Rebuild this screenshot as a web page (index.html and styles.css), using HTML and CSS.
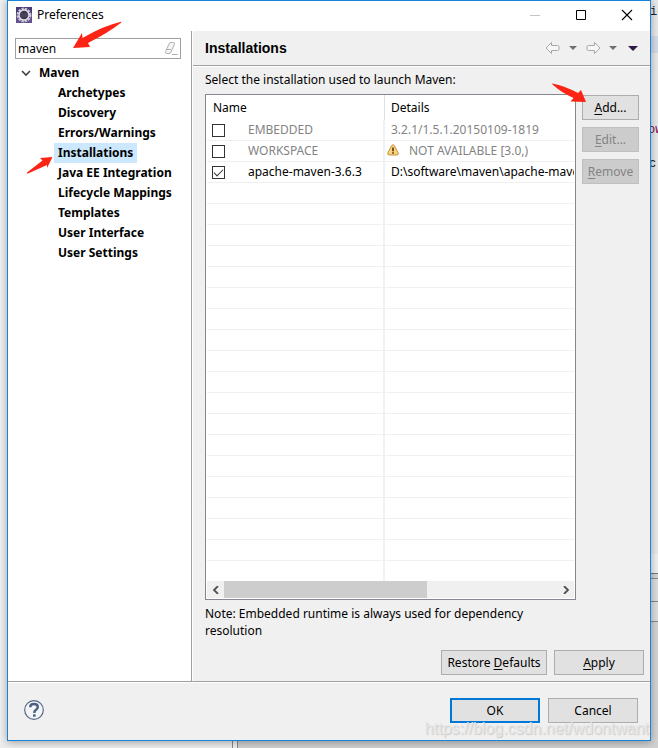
FILE: index.html
```html
<!DOCTYPE html>
<html lang="en">
<head>
<meta charset="utf-8">
<title>Preferences</title>
<link rel="stylesheet" href="styles.css">
</head>
<body>
<div class="backdrop" aria-hidden="true">
  <div class="editor">
    <span class="frag frag-a">i<b>c</b></span>
    <span class="current-line"></span>
    <span class="frag frag-b">ow</span>
    <span class="frag frag-c">c<b>:</b></span>
  </div>
  <div class="views"><i></i><i></i><i></i></div>
  <div class="bottom"><div class="bottom-left"></div><div class="bottom-right"></div></div>
</div>

<main class="window">
  <header class="titlebar">
    <svg class="app-icon" viewBox="0 0 16 16" aria-hidden="true">
      <rect width="16" height="16" fill="#4a3a78"/>
      <rect y="8" width="16" height="8" fill="#65508f"/>
      <circle cx="8" cy="8" r="6.3" fill="none" stroke="#c9c6d2" stroke-width="2.2" stroke-dasharray="2.3 1"/>
      <circle cx="8" cy="8" r="5" fill="#3b3450" stroke="#e3e2e8" stroke-width="1.4"/>
      <path d="M4 7h8M4 9h8" stroke="#5a5270"/>
    </svg>
    <h1>Preferences</h1>
    <div class="caption-buttons">
      <button type="button" aria-label="Minimize" disabled><svg viewBox="0 0 12 12"><path d="M1 6.5h10" stroke="#c4c4c4"/></svg></button>
      <button type="button" aria-label="Maximize"><svg viewBox="0 0 12 12"><path d="M1.5 1.5h9v9h-9z" fill="none" stroke="#000"/></svg></button>
      <button type="button" aria-label="Close"><svg viewBox="0 0 12 12"><path d="M1 1l10 10M11 1L1 11" stroke="#000" stroke-width="1.1"/></svg></button>
    </div>
  </header>

  <div class="content">
    <nav class="sidebar">
      <div class="filter">
        <input type="text" value="maven" aria-label="Filter text">
        <button type="button" aria-label="Clear"><svg viewBox="0 0 14 14"><path d="M1.500 9.500L5 2q.5-1.500 2-1.500h2.500q1.500 0 1 1.500L7 10q-.5 1.500-2 1.500H2.500q-1.500 0-1-2z" fill="#f4f4f4" stroke="#b0b0b0"/><path d="M2.500 7.500h4l1 1M8 12.500h5.500" fill="none" stroke="#b0b0b0"/></svg></button>
      </div>
      <ul class="tree">
        <li><a class="root" href="#"><svg viewBox="0 0 10 10" aria-hidden="true"><path d="M1 3l4 4 4-4" fill="none" stroke="#404040" stroke-width="1.600"/></svg>Maven</a>
          <ul>
            <li><a href="#">Archetypes</a></li>
            <li><a href="#">Discovery</a></li>
            <li><a href="#">Errors/Warnings</a></li>
            <li><a class="selected" href="#">Installations</a></li>
            <li><a href="#">Java EE Integration</a></li>
            <li><a href="#">Lifecycle Mappings</a></li>
            <li><a href="#">Templates</a></li>
            <li><a href="#">User Interface</a></li>
            <li><a href="#">User Settings</a></li>
          </ul>
        </li>
      </ul>
    </nav>

    <section class="page">
      <div class="page-head">
        <h2>Installations</h2>
        <div class="history">
          <button type="button" aria-label="Back"><svg width="16" height="14" viewBox="0 0 16 14"><path d="M1 7l5.500-5.500v3h6q1.500 0 1.500 1.500v2q0 1.500-1.500 1.500h-6v3z" fill="#f6f6f6" stroke="#a8a8a8"/></svg></button>
          <button type="button" aria-label="Back history"><svg width="8" height="4" viewBox="0 0 8 4"><path d="M0 0h8L4 4z" fill="#707074"/></svg></button>
          <button type="button" aria-label="Forward"><svg width="16" height="14" viewBox="0 0 16 14"><path d="M15 7L9.500 1.500v3h-6Q2 4.500 2 6v2q0 1.500 1.500 1.500h6v3z" fill="#f6f6f6" stroke="#a8a8a8"/></svg></button>
          <button type="button" aria-label="Forward history"><svg width="8" height="4" viewBox="0 0 8 4"><path d="M0 0h8L4 4z" fill="#707074"/></svg></button>
          <button class="view-menu" type="button" aria-label="View menu"><svg width="10" height="5" viewBox="0 0 10 5"><path d="M0 0h10L5 5z" fill="#2e1a47"/></svg></button>
        </div>
      </div>

      <div class="page-body">
        <p class="prompt">Select the installation used to launch Maven:</p>
        <div class="chooser">
          <div class="grid">
            <div class="grid-view">
              <table>
                <colgroup><col class="name-col"><col></colgroup>
                <thead><tr><th>Name</th><th>Details</th></tr></thead>
                <tbody>
                  <tr class="muted"><td><label><input type="checkbox">EMBEDDED</label></td><td>3.2.1/1.5.1.20150109-1819</td></tr>
                  <tr class="muted"><td><label><input type="checkbox">WORKSPACE</label></td><td class="warned"><svg viewBox="0 0 12 12" aria-hidden="true"><path d="M6 .8q1 0 1.600 1.200l3.400 6.500q1 2.500-1 2.500H2q-2 0-1-2.500L4.400 2Q5 .8 6 .8z" fill="#f8d380" stroke="#c99339"/><path d="M6 3.500v3.700M6 8.300v1.400" stroke="#4c3510" stroke-width="1.600"/></svg>NOT AVAILABLE [3.0,)</td></tr>
                  <tr><td><label><input type="checkbox" checked>apache-maven-3.6.3</label></td><td>D:\software\maven\apache-maven-3.6.3</td></tr>
                </tbody>
              </table>
              <div class="empty-rows"></div>
            </div>
            <div class="scrollbar">
              <button type="button" aria-label="Scroll left"><svg viewBox="0 0 8 8"><path d="M6 0L2 4l4 4" fill="none" stroke="#505050" stroke-width="1.800"/></svg></button>
              <div class="track"><div class="thumb"></div></div>
              <button type="button" aria-label="Scroll right"><svg viewBox="0 0 8 8"><path d="M2 0l4 4-4 4" fill="none" stroke="#505050" stroke-width="1.800"/></svg></button>
            </div>
          </div>
          <div class="side-buttons">
            <button class="btn" type="button"><u>A</u>dd...</button>
            <button class="btn" type="button" disabled><u>E</u>dit...</button>
            <button class="btn" type="button" disabled><u>R</u>emove</button>
          </div>
        </div>
        <p class="note">Note: Embedded runtime is always used for dependency resolution</p>
      </div>
      <div class="page-actions">
        <button class="btn restore" type="button">Restore <u>D</u>efaults</button>
        <button class="btn wide" type="button"><u>A</u>pply</button>
      </div>
    </section>
  </div>

  <footer class="footer">
    <button class="help" type="button" aria-label="Help"><svg viewBox="0 0 20 20"><circle cx="10" cy="10" r="9.300" fill="#f4f5f7" stroke="#56688a" stroke-width="1.200"/><path d="M6.200 7.200Q6.200 4 10 4t3.800 3Q13.800 8.600 12 9.800T10.300 13" fill="none" stroke="#4d6083" stroke-width="2.400"/><path d="M9 14.300h2.600v2.400H9z" fill="#4d6083"/></svg></button>
    <div class="dialog-actions">
      <button class="btn wide default" type="button">OK</button>
      <button class="btn wide" type="button">Cancel</button>
    </div>
  </footer>
</main>

<svg class="arrows" width="658" height="200" viewBox="0 0 658 200" aria-hidden="true">
  <g fill="#fc2414">
    <path d="M73 48l9-15 .5 5Q103 26 121 21.800q1 .2 0 1Q108 33 88 43l2 4z"/>
    <path d="M52.500 157L40 158l2.500 2.500L27 172.500q0 1.500 1 1L47 165v3z"/>
    <path d="M586 102l-5-12-3 3Q565 86 552.500 83.500q-.8.5 0 1Q562 93 573.500 98l-3 3.500z"/>
  </g>
</svg>
<span class="watermark">https://blog.csdn.net/wdontwant</span>
</body>
</html>
```
FILE: styles.css
```css
* { box-sizing: border-box; }

body {
  margin: 0;
  height: 100vh;
  padding: 0 7px 7px;
  overflow: hidden;
  background: #f0f0f0;
  color: #000;
  font: 12px/20px "Noto Sans", sans-serif;
}

h1, h2, p, ul { margin: 0; padding: 0; font-size: inherit; }
ul { list-style: none; }
a { color: inherit; text-decoration: none; }
svg { display: block; }
button, input { font: inherit; color: inherit; }
button { border: 0; padding: 0; background: none; }

/* Workbench behind the dialog */
.backdrop { position: absolute; inset: 0; overflow: hidden; }
.editor { position: absolute; top: 0; right: 0; width: 7px; height: 554px; background: #e9e9e9; font: 12px/16px "Liberation Mono", monospace; }
.current-line { position: absolute; top: 36px; width: 7px; height: 17px; background: #d4dce8; }
.frag { position: absolute; left: 0; color: #223; }
.frag b { color: #c98a35; font-weight: normal; }
.frag-a { top: 4px; left: -1px; }
.frag-b { top: 122px; left: -3px; color: #7f0055; }
.frag-c { top: 156px; left: -2px; }
.views { position: absolute; top: 573px; right: 0; width: 8px; bottom: 0; background: #d4d4d4; border-top: 1px solid #777; }
.views i { display: block; height: 5px; border-bottom: 1px solid #888; }
.views i + i { height: 23px; background: #dedede; }
.views i + i + i { height: 20px; }
.bottom { position: absolute; left: 0; right: 0; bottom: 0; height: 7px; display: flex; }
.bottom-left { width: 233px; background: #ededed; border-right: 1px solid #888; }
.bottom-right { flex: 1; margin-left: 4px; background: #d0d0d0; border-left: 1px solid #888; }

/* Dialog window */
.window {
  position: relative;
  display: flex;
  flex-direction: column;
  height: 100%;
  background: #f0f0f0;
  border: 1px solid #1883d7;
  box-shadow: 0 1px 8px rgba(0, 0, 0, .35);
}
.titlebar { display: flex; align-items: center; height: 30px; padding: 0 0 2px 8px; background: #fff; }
.titlebar h1 { flex: 1; padding-left: 5px; font-weight: normal; line-height: 28px; }
.app-icon { width: 16px; height: 16px; }
.caption-buttons { display: flex; }
.caption-buttons button { display: grid; place-items: center; width: 46px; height: 28px; }
.caption-buttons svg { width: 12px; height: 12px; }

.content { flex: 1; display: flex; min-height: 0; border-bottom: 1px solid #a0a0a0; }
.sidebar { width: 184px; padding: 7px 10px 0 7px; background: #fff; border-right: 1px solid #a0a0a0; }
.filter { display: flex; height: 21px; border: 1px solid #a0a0a0; }
.filter input { flex: 1; min-width: 0; border: 0; padding: 0 2px; outline: 0; background: none; }
.filter button { padding-right: 2px; }
.filter svg { width: 14px; height: 14px; }
.tree { margin-top: 4px; font-weight: bold; white-space: nowrap; }
.tree a { display: inline-block; height: 20px; padding: 0 4px; vertical-align: top; }
.tree li { line-height: 20px; }
.tree ul { padding-left: 39px; }
.tree .root { display: flex; align-items: center; gap: 8px; padding-left: 6px; }
.root svg { width: 10px; height: 10px; }
.tree .selected { background: #cce8ff; }

.page { flex: 1; min-width: 0; display: flex; flex-direction: column; border-left: 1px solid #fff; }
.page-head { display: flex; align-items: center; justify-content: space-between; height: 35px; padding: 0 12px; border-bottom: 1px solid #a0a0a0; box-shadow: 0 1px #fff; }
.page-head h2 { font: bold 14px/20px "Liberation Sans", sans-serif; }
.history { display: flex; align-items: center; gap: 8px; }
.view-menu { margin-left: 3px; }
.page-body { flex: 1; min-height: 0; display: flex; flex-direction: column; padding: 4px 11px 0 12px; }
.prompt { line-height: 20px; }
.chooser { flex: 1; min-height: 0; display: flex; gap: 6px; margin-top: 4px; }
.side-buttons { display: flex; flex-direction: column; gap: 7px; width: 57px; padding-top: 1px; }

.grid { flex: 1; min-width: 0; display: flex; flex-direction: column; padding: 0 1px 1px; background: #fff; border: 1px solid #828790; }
.grid-view { flex: 1; min-height: 0; display: flex; flex-direction: column; overflow: hidden; }
table { width: 100%; table-layout: fixed; border-collapse: separate; border-spacing: 0; }
.name-col { width: 178px; }
th, td { padding: 0 0 0 6px; overflow: hidden; white-space: nowrap; text-align: left; font-weight: normal; line-height: 20px; }
th { height: 25px; }
td { height: 21px; border-bottom: 1px solid #f0f0f0; }
th:first-child { border-right: 1px solid #e0e0e0; }
td:first-child { border-right: 2px solid #ecf2fc; }
td label { display: flex; align-items: center; }
td input { appearance: none; width: 13px; height: 13px; margin: 0 23px 0 -1px; border: 1px solid #333; background: #fff; }
td input:checked { display: grid; place-items: center; }
td input:checked::before { content: ""; width: 8px; height: 4px; margin-bottom: 2px; border: solid #333; border-width: 0 0 1px 1px; transform: rotate(-45deg); }
.muted { color: #838383; }
td svg { display: inline-block; width: 12px; height: 12px; margin: 0 10px 0 -4px; vertical-align: -1px; }
.empty-rows {
  flex: 1;
  background:
    linear-gradient(#ecf2fc, #ecf2fc) 176px 0 / 2px 100% no-repeat,
    repeating-linear-gradient(#fff 0 20px, #f0f0f0 20px 21px);
}
.scrollbar { display: flex; height: 17px; background: #f0f0f0; }
.scrollbar button { display: grid; place-items: center; width: 17px; }
.scrollbar svg { width: 8px; height: 8px; }
.track { flex: 1; }
.thumb { width: 61%; height: 100%; background: #cdcdcd; }
.note { margin-top: 5px; line-height: 17px; max-width: 350px; }

.page-actions { display: flex; justify-content: flex-end; gap: 7px; padding: 11px 6px 6px; }
.btn { height: 25px; border: 1px solid #adadad; background: #e1e1e1; text-align: center; line-height: 20px; white-space: nowrap; }
.btn:disabled { color: #838383; background: #ccc; border-color: #bfbfbf; }
.btn u { text-underline-offset: 2px; }
.restore { width: 106px; }
.wide { width: 90px; }
.default { border: 2px solid #0078d7; }

.footer { display: flex; align-items: center; justify-content: space-between; height: 58px; padding: 0 12px 4px 16px; border-top: 1px solid #fff; }
.help svg { width: 20px; height: 20px; }
.dialog-actions { display: flex; gap: 8px; margin-top: 2px; }

/* Annotations over the dialog */
.arrows { position: absolute; top: 0; left: 0; pointer-events: none; }
.watermark { position: absolute; right: 9px; bottom: 9px; color: #e6e6e6; font: 16px/20px "Liberation Sans", sans-serif; text-shadow: 1px 1px 1px #c8c8c8; pointer-events: none; }
```
